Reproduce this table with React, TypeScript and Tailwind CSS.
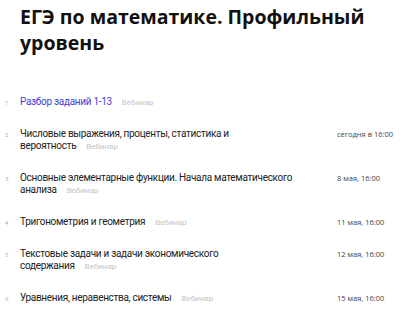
import React from "react";

const items = [
  { n: 1, title: "Разбор заданий 1-13", date: "", link: true },
  { n: 2, title: "Числовые выражения, проценты, статистика и вероятность", date: "сегодня в 16:00" },
  { n: 3, title: "Основные элементарные функции. Начала математического анализа", date: "8 мая, 16:00" },
  { n: 4, title: "Тригонометрия и геометрия", date: "11 мая, 16:00" },
  { n: 5, title: "Текстовые задачи и задачи экономического содержания", date: "12 мая, 16:00" },
  { n: 6, title: "Уравнения, неравенства, системы", date: "15 мая, 16:00" },
];

export default function App() {
  return (
    <div className="w-[400px] h-[313px] overflow-hidden bg-white" style={{ fontFamily: '"Open Sans", "Noto Sans", sans-serif' }}>
      <h1 className="pl-5 pt-[4px] pr-4 text-[19.5px] font-bold leading-[26px] text-[#111]">
        ЕГЭ по математике. Профильный уровень
      </h1>
      <div className="mt-[40px] flex flex-col gap-[19px]" style={{ fontFamily: 'Roboto, "Noto Sans", sans-serif' }}>
        {items.map((it) => (
          <div key={it.n} className="flex items-start">
            <div className="w-5 pl-[5px] pt-[1px] text-[6px] leading-[12px] text-[#aaa]" style={{ fontFamily: '"Open Sans", sans-serif' }}>{it.n}</div>
            <div className="w-[296px] text-[10px] leading-[12px] tracking-[-0.3px] text-[#222]">
              <span className={it.link ? "text-[#3f3fd6]" : ""}>{it.title}</span>
              <span className="ml-[10px] text-[8px] tracking-normal text-[#c4c4c4]">Вебинар</span>
            </div>
            <div className="ml-[21px] text-[7.5px] leading-[12px] text-[#444] whitespace-nowrap" style={{ fontFamily: '"Open Sans", sans-serif' }}>{it.date}</div>
          </div>
        ))}
      </div>
    </div>
  );
}
